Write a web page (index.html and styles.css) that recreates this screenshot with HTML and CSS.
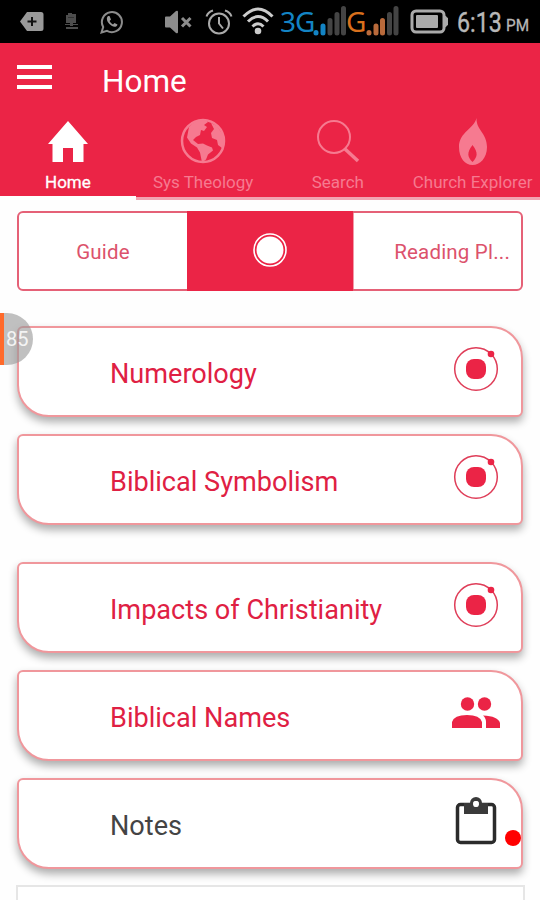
FILE: index.html
```html
<!DOCTYPE html>
<html lang="en">
<head>
  <meta charset="UTF-8">
  <meta name="viewport" content="width=device-width, initial-scale=1.0">
  <title>Home</title>
  <link rel="stylesheet" href="styles.css">
</head>
<body>
  <div class="status">
    <svg class="ic-tag" width="24" height="20" viewBox="0 0 24 20"><path d="M7 0h14a2.500 2.500 0 0 1 2.500 2.500v14a2.500 2.500 0 0 1-2.500 2.500H7L0 9.500z" fill="#999"/><path d="M12 5v9M7.500 9.500h9" stroke="#111" stroke-width="2"/></svg>
    <svg class="ic-small" width="14" height="17" viewBox="0 0 14 17"><path d="M1 2h2V0h4v1h4v9H1zM5 10h3v3H5zM0 11h13v1H0zM1 14h12v2H1z" fill="#4d4d4d"/><path d="M3 4.500h6" stroke="#333"/></svg>
    <svg class="ic-chat" width="24" height="24" viewBox="0 0 24 24"><path d="M1.500 22.500l1.700-5.500A10 10 0 1 1 7 20.800z" fill="none" stroke="#8c8c8c" stroke-width="2"/><path d="M8 6c-3 3 .5 8 4 10 2.500 1.500 5 .8 5.500-1.500l-3-1.600-1.500 1.500c-1.500-.8-2.700-2-3.400-3.400L11 9.500 9.500 6z" fill="#999"/></svg>
    <svg class="ic-mute" width="28" height="24" viewBox="0 0 28 24"><path d="M1 6.500h4L11 1q2-1 2 1v20q0 2-2 1L5 17.500H1q-1 0-1-1v-9q0-1 1-1z" fill="#8c8c8c"/><path d="M17 8l8.500 8.500M25.500 8L17 16.500" stroke="#8c8c8c" stroke-width="3"/></svg>
    <svg class="ic-alarm" width="28" height="26" viewBox="0 0 28 26"><circle cx="14" cy="14.500" r="10" fill="none" stroke="#aaa" stroke-width="2"/><path d="M14 8v6.500l4 5M1.500 7.500Q3 3 8 1.500M26.500 7.500Q25 3 20 1.500" fill="none" stroke="#aaa" stroke-width="2"/></svg>
    <svg class="ic-wifi" width="32" height="28" viewBox="0 0 32 28"><g fill="none" stroke="#ccc" stroke-width="3"><path d="M1.500 9.500Q16-5.500 30.500 9.500"/><path d="M6 14.500Q16 4.500 26 14.500"/><path d="M10.500 19.500Q16 14 21.500 19.500"/></g><circle cx="16" cy="24" r="3.300" fill="#ccc"/></svg>
    <span class="net net-blue">3G</span>
    <svg class="bars" width="33" height="31" viewBox="0 0 33 31"><g stroke-width="5" stroke-linecap="round"><path d="M3 27.500v.5M10 21v7" stroke="#1384c4"/><path d="M17 15.500V28M24 9.500V28M30.500 3.500V28" stroke="#444"/></g></svg>
    <span class="net net-orange">G</span>
    <svg class="bars" width="33" height="31" viewBox="0 0 33 31"><g stroke-width="5" stroke-linecap="round"><path d="M3 27.500v.5M10 21v7M16.500 15.500V28" stroke="#b96a3b"/><path d="M23.500 9.500V28M30 3.500V28" stroke="#444"/></g></svg>
    <svg class="ic-battery" width="39" height="25" viewBox="0 0 39 25"><path d="M35 7l2.500 2v7L35 18z" fill="#aaa" stroke="#aaa"/><rect x="2" y="2" width="32" height="21" rx="4" fill="none" stroke="#aaa" stroke-width="3"/><rect x="6" y="6" width="22" height="13" rx="1" fill="#aaa"/></svg>
    <span class="time">6:13</span><span class="pm">PM</span>
  </div>

  <header>
    <div class="toolbar">
      <div class="burger"><i></i><i></i><i></i></div>
      <h1>Home</h1>
    </div>
    <nav>
      <a class="tab active">
        <svg width="44" height="48" viewBox="0 0 44 48"><path d="M22 3L42 26h-4.500v18H27V30H17v14H6.500V26H2z" fill="#fff"/></svg>
        Home
      </a>
      <a class="tab">
        <svg width="46" height="48" viewBox="0 0 46 48"><circle cx="23" cy="23" r="21" fill="none" stroke="#f67a90" stroke-width="2.500"/><path d="M9 9Q15 2 23 2q4 0 5 2l-4 3 3 2-3 4-3-1-1 5-4 2-3 3 5 4 5-.5 4 2 5 2 1 3-5 4-2 5-4 3-2-10-3-5-6-4-4-6z" fill="#f67a90"/><path d="M31 5l6 3 6 9 1 8-2 5-4-3-1-5-5-2-1-5 3-4z" fill="#f67a90"/></svg>
        Sys Theology
      </a>
      <a class="tab">
        <svg width="44" height="48" viewBox="0 0 44 48"><circle cx="18" cy="19" r="16" fill="none" stroke="#f67a90" stroke-width="2"/><path d="M29 31l13 12" stroke="#f67a90" stroke-width="3.500"/></svg>
        Search
      </a>
      <a class="tab">
        <svg width="30" height="48" viewBox="0 0 30 48"><path fill-rule="evenodd" d="M18.500 0c-.5 12 10.500 15 10.500 29C29 40 22 47 14.500 47S1 40 1 29C1 14 16 11 18.500 0zM14.500 27c-6 8-5 12 0 17 5-5 6-9 0-17z" fill="#f67a90"/></svg>
        Church Explorer
      </a>
    </nav>
  </header>

  <main>
    <div class="segment">
      <div class="seg">Guide</div>
      <div class="seg on"><svg width="36" height="36" viewBox="0 0 36 36"><circle cx="18" cy="18" r="16" fill="none" stroke="#fff" stroke-width="1.600"/><circle cx="18" cy="18" r="13.500" fill="#fff"/></svg></div>
      <div class="seg last">Reading Pl...</div>
    </div>

    <div class="card">
      <span>Numerology</span>
      <svg width="48" height="48" viewBox="0 0 48 48"><use href="#orbit"/></svg>
      <div class="bubble">85</div>
    </div>
    <div class="card gap">
      <span>Biblical Symbolism</span>
      <svg width="48" height="48" viewBox="0 0 48 48"><use href="#orbit"/></svg>
    </div>
    <div class="card">
      <span>Impacts of Christianity</span>
      <svg width="48" height="48" viewBox="0 0 48 48"><g id="orbit"><circle cx="24" cy="24" r="21.300" fill="none" stroke="#df3d58" stroke-width="1.500"/><rect x="14" y="14" width="20" height="20" rx="8" fill="#eb2446"/><circle cx="39" cy="9" r="3.300" fill="#eb2446"/></g></svg>
    </div>
    <div class="card">
      <span>Biblical Names</span>
      <svg width="48" height="48" viewBox="0 0 48 48" fill="#eb2446"><circle cx="15.500" cy="15" r="6.700"/><circle cx="32.500" cy="15" r="6.700"/><path d="M0 39v-6q2-7 15-7t15 7v6zM31 26.500q15 .5 17 7.500v5H34v-6q0-4-3-6.500z"/></svg>
    </div>
    <div class="card dark">
      <span>Notes</span>
      <svg width="48" height="48" viewBox="0 0 48 48"><rect x="5.500" y="7.500" width="37" height="38" rx="3" fill="none" stroke="#2b2b2b" stroke-width="3.500"/><path fill-rule="evenodd" d="M12 6h6a6 6 0 0 1 12 0h6v11H12zM24 4a3 3 0 1 0 0 6 3 3 0 0 0 0-6z" fill="#3a3a3a"/><circle cx="24" cy="7" r="3" fill="#fff"/></svg>
      <div class="dot"></div>
    </div>
    <div class="panel"></div>
  </main>
</body>
</html>
```

FILE: styles.css
```css
* {
  box-sizing: border-box;
}

body {
  margin: 0;
  height: 900px;
  overflow: hidden;
  background: #fefefe;
  font-family: Roboto, "Liberation Sans", sans-serif;
  color: #df2043;
}

svg {
  display: block;
  flex: none;
}

/* status bar */
.status {
  display: flex;
  align-items: center;
  height: 43px;
  padding-left: 20px;
  background: #000;
  color: #b8b8b8;
}

.ic-small { margin-left: 21px; }
.ic-chat { margin-left: 21px; }
.ic-mute { margin-left: 41px; }
.ic-alarm { margin-left: 12px; }
.ic-wifi { margin-left: 9px; margin-top: -2px; }
.ic-battery { margin-left: 11px; }

.net {
  font-family: "Noto Sans", sans-serif;
  font-size: 28px;
  line-height: 40px;
  width: 33px;
  margin: -2px 0 0 6px;
  letter-spacing: -1px;
  flex: none;
}

.net-blue { color: #1384c4; }
.net-orange { color: #d9701d; width: 20px; margin-left: 0; }
.bars { margin-top: -2px; }

.time {
  width: 47px;
  margin: 4px 0 0 8px;
  font-size: 27px;
  line-height: 43px;
  transform: scaleX(.86);
  transform-origin: left;
  -webkit-text-stroke: .4px;
}

.pm {
  font-size: 17px;
  transform: scaleX(.9);
  transform-origin: left;
  margin: 7px 0 0 2px;
  -webkit-text-stroke: .3px;
}

/* header */
header {
  height: 157px;
  background: #eb2446;
}

.toolbar {
  display: flex;
  align-items: flex-start;
  height: 72px;
  padding: 22px 17px 0;
}

.burger {
  display: grid;
  gap: 6px;
  width: 35px;
}

.burger i {
  height: 4px;
  background: #fff;
}

h1 {
  margin: -1px 0 0 50px;
  font-size: 31.5px;
  line-height: 36px;
  font-weight: 400;
  color: #fff;
}

nav {
  display: flex;
}

.tab {
  display: flex;
  flex-direction: column;
  align-items: center;
  width: 135px;
  height: 85px;
  padding-top: 3px;
  border-bottom: 3px solid #f2a3b1;
  font-size: 17px;
  line-height: 23px;
  white-space: nowrap;
  color: #f67a90;
}

.tab svg {
  margin-bottom: 5px;
}

.tab.active {
  width: 136px;
  border-bottom: 4px solid #fff;
  color: #fff;
  -webkit-text-stroke: .3px;
}

/* content */
main {
  padding: 11px 17px 0;
}

.segment {
  display: flex;
  height: 80px;
  margin-bottom: 35px;
  border: 2px solid #e56177;
  border-radius: 6px;
  background: #fff;
}

.seg {
  width: 168px;
  display: flex;
  align-items: center;
  justify-content: center;
  font-size: 20.5px;
  letter-spacing: .2px;
  padding-top: 1px;
  color: #dc526c;
}

.seg.on {
  width: 166px;
  margin: -2px 0;
  padding-bottom: 4px;
  background: #eb2446;
}

.seg.last {
  flex: 1;
  justify-content: flex-end;
  padding-right: 11px;
  border-left: 1px solid #f29aa8;
}

.card {
  position: relative;
  display: flex;
  justify-content: space-between;
  height: 91px;
  margin-bottom: 17px;
  padding: 17px 21px 0 91px;
  border: 2px solid #f0979c;
  border-radius: 6px 32px 6px 32px;
  background: #fff;
  box-shadow: 0 5px 8px rgba(0, 0, 0, .32);
}

.card.gap {
  margin-bottom: 37px;
}

.card span {
  font-size: 27.1px;
  line-height: 58px;
}

.card.dark {
  color: #444;
}

.bubble {
  position: absolute;
  left: -19px;
  top: -15px;
  width: 33px;
  height: 52px;
  border-left: 4px solid #ff6a2b;
  border-radius: 0 26px 26px 0;
  background: rgba(150, 150, 150, .6);
  font-size: 20px;
  line-height: 53px;
  padding-left: 2px;
  color: #f4f4f4;
}

.dot {
  position: absolute;
  right: 0;
  top: 50px;
  width: 16px;
  height: 16px;
  border-radius: 50%;
  background: #f00;
}

.panel {
  height: 40px;
  margin: -1px -2px 0 -1px;
  border: 2px solid #e6e6e6;
  background: #fff;
}
```
